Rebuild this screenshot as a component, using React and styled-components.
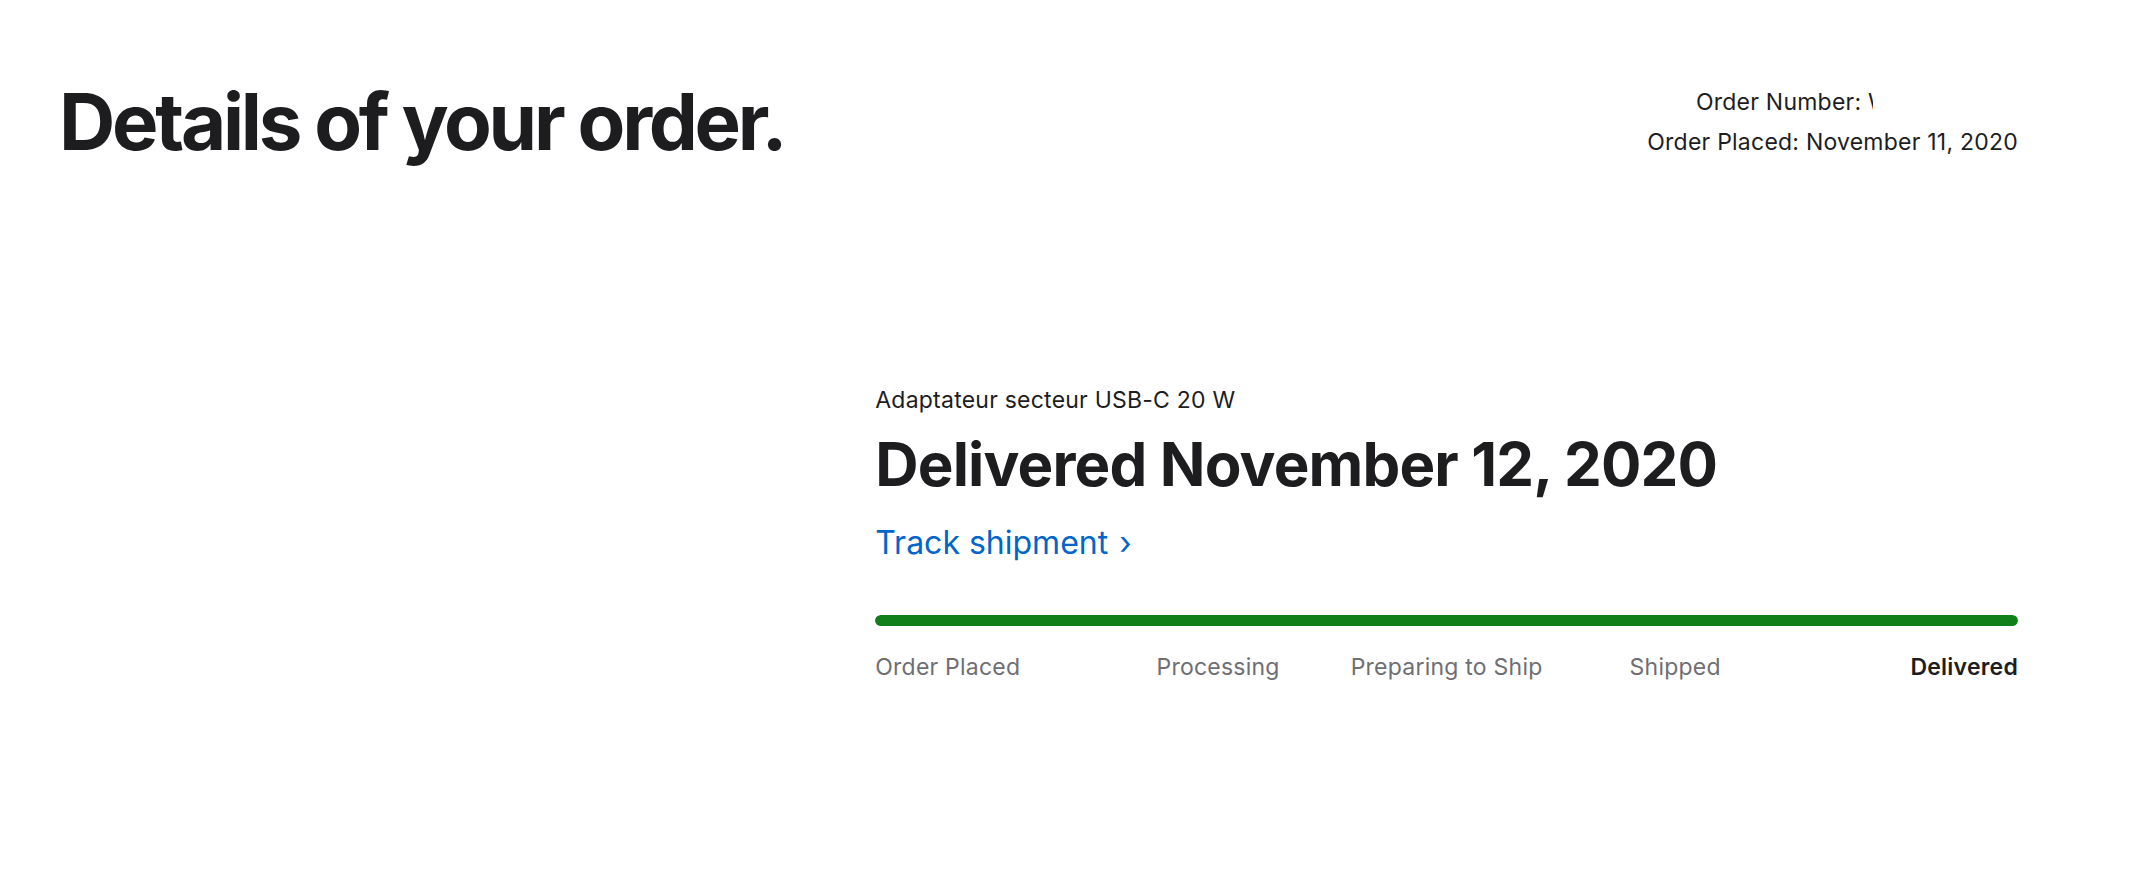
import React from 'react';
import styled, { createGlobalStyle } from 'styled-components';

const GlobalStyle = createGlobalStyle`
  html, body {
    margin: 0;
    padding: 0;
    background: #fff;
  }
  body {
    font-family: Inter, "Noto Sans", "Liberation Sans", sans-serif;
    color: #1d1d1f;
    -webkit-font-smoothing: antialiased;
  }
`;

const steps = ['Order Placed', 'Processing', 'Preparing to Ship', 'Shipped', 'Delivered'];

const Page = () => (
  <>
    <GlobalStyle />
    <Container>
      <Header>
        <Title>Details of your order.</Title>
        <Meta>
          <MetaLine>
            Order Number: <Redacted>W</Redacted>
          </MetaLine>
          <MetaLine>Order Placed: November 11, 2020</MetaLine>
        </Meta>
      </Header>

      <Shipment>
        <ProductInfo>
          <ProductName>Adaptateur secteur USB-C 20 W</ProductName>
          <Status>Delivered November 12, 2020</Status>
          <TrackLink href="#">
            Track shipment <Chevron>›</Chevron>
          </TrackLink>

          <Progress>
            <ProgressFill style={{ width: `${(5 / steps.length) * 100}%` }} />
          </Progress>
          <Steps>
            {steps.map((step, index) => (
              <Step
                key={step}
                $align={index === 0 ? 'left' : index === steps.length - 1 ? 'right' : 'center'}
                $current={index === steps.length - 1}
              >
                {step}
              </Step>
            ))}
          </Steps>
        </ProductInfo>
      </Shipment>
    </Container>
  </>
);

const Container = styled.main`
  width: 1959px;
  padding: 79px 0 0 59px;
`;

const Header = styled.header`
  display: flex;
  justify-content: space-between;
  align-items: flex-start;
`;

const Title = styled.h1`
  margin: 0;
  font-size: 78px;
  line-height: 86px;
  font-weight: 700;
  letter-spacing: -0.042em;
  color: #1d1d1f;
`;

const Meta = styled.div`
  margin-top: 3px;
  text-align: right;
`;

const MetaLine = styled.div`
  font-size: 23px;
  line-height: 40px;
  letter-spacing: 0.01em;
  color: #1d1d1f;
`;

const Redacted = styled.span`
  display: inline-block;
  width: 5px;
  margin-right: 145px;
  overflow: hidden;
  vertical-align: bottom;
`;

const Shipment = styled.section`
  display: grid;
  grid-template-columns: repeat(12, 1fr);
  margin-top: 221px;
`;

const ProductInfo = styled.div`
  grid-column: 6 / span 7;
`;

const ProductName = styled.div`
  font-size: 23px;
  line-height: 28px;
  letter-spacing: 0.01em;
`;

const Status = styled.h2`
  margin: 17px 0 0;
  font-size: 60px;
  line-height: 66px;
  font-weight: 700;
  letter-spacing: -0.014em;
  color: #1d1d1f;
`;

const TrackLink = styled.a`
  display: inline-block;
  margin-top: 27px;
  font-size: 32px;
  line-height: 38px;
  color: #0066cc;
  text-decoration: none;
`;

const Chevron = styled.span`
  margin-left: 2px;
`;

const Progress = styled.div`
  margin-top: 53px;
  height: 11px;
  border-radius: 6px;
  background: #e8e8ed;
  overflow: hidden;
`;

const ProgressFill = styled.div`
  height: 100%;
  border-radius: 6px;
  background: #11801a;
`;

const Steps = styled.div`
  display: grid;
  grid-template-columns: repeat(5, 1fr);
  margin-top: 27px;
`;

const Step = styled.div`
  font-size: 23px;
  line-height: 28px;
  letter-spacing: 0.01em;
  text-align: ${(p) => p.$align};
  font-weight: ${(p) => (p.$current ? 600 : 400)};
  color: ${(p) => (p.$current ? '#1d1d1f' : '#6e6e73')};
`;

export default Page;
